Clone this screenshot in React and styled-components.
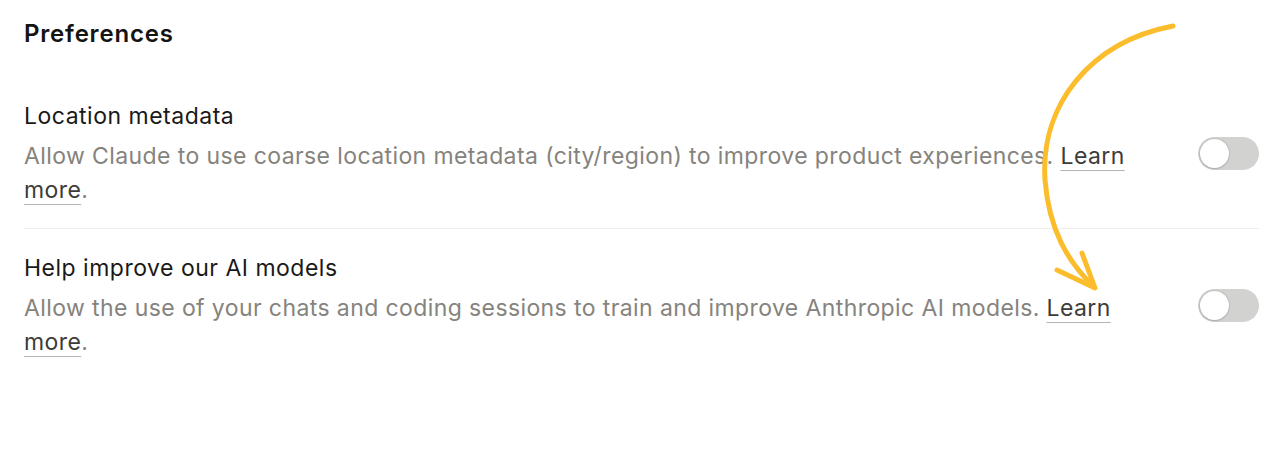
import React, { useState } from 'react';
import styled, { createGlobalStyle } from 'styled-components';

const GlobalStyle = createGlobalStyle`
    body {
        margin: 0;
        background: #ffffff;
        font-family: 'Inter', 'Liberation Sans', sans-serif;
    }
`

const prefs = [
    {
        id: 'location',
        title: 'Location metadata',
        text: 'Allow Claude to use coarse location metadata (city/region) to improve product experiences.',
    },
    {
        id: 'training',
        title: 'Help improve our AI models',
        text: 'Allow the use of your chats and coding sessions to train and improve Anthropic AI models.',
    },
];

function App() {
    const [enabled, setEnabled] = useState({ location: false, training: false });

    const toggle = (id) => {
        setEnabled({ ...enabled, [id]: !enabled[id] });
    };

    return (
        <Page>
            <GlobalStyle />
            <H2>Preferences</H2>
            <List>
                {prefs.map((pref) => (
                    <Row key={pref.id}>
                        <Info>
                            <Label>{pref.title}</Label>
                            <Desc>
                                {pref.text} <LinkText href="#">Learn more</LinkText>.
                            </Desc>
                        </Info>
                        <Switch $on={enabled[pref.id]} onClick={() => toggle(pref.id)}>
                            <Knob $on={enabled[pref.id]} />
                        </Switch>
                    </Row>
                ))}
            </List>
            <Arrow width="1280" height="450" viewBox="0 0 1280 450">
                <path
                    d="M1173 26 C1090 42 1040 105 1045 180 C1049 230 1068 262 1094 287"
                    fill="none"
                    stroke="#fbbd2c"
                    strokeWidth="5"
                    strokeLinecap="round"
                />
                <path
                    d="M1082 253 L1095 288 L1057 270"
                    fill="none"
                    stroke="#fbbd2c"
                    strokeWidth="5"
                    strokeLinecap="round"
                    strokeLinejoin="round"
                />
            </Arrow>
        </Page>
    );
}

const Page = styled.div`
    position: relative;
    height: 450px;
    padding: 16px 21px 0 24px;
    box-sizing: border-box;
`

const H2 = styled.h2`
    margin: 0;
    font-size: 24px;
    font-weight: 600;
    letter-spacing: 0.8px;
    color: #141413;
    line-height: 36px;
`

const List = styled.div`
    display: flex;
    flex-direction: column;
    margin-top: 47px;
`

const Row = styled.div`
    display: flex;
    align-items: center;
    justify-content: space-between;
    gap: 30px;
    padding: 22px 0 21px;
    border-bottom: 1px solid #efeeea;

    &:first-child {
        padding-top: 0;
    }

    &:last-child {
        border-bottom: none;
    }
`

const Info = styled.div`
    display: flex;
    flex-direction: column;
    max-width: 1132px;
`

const Label = styled.div`
    font-size: 23px;
    letter-spacing: 0.5px;
    color: #1a1918;
    line-height: 34px;
`

const Desc = styled.p`
    margin: 6px 0 0;
    font-size: 23px;
    letter-spacing: 0.4px;
    line-height: 34px;
    color: #85837d;
`

const LinkText = styled.a`
    color: #3d3c38;
    text-decoration: underline;
    text-decoration-color: #b5b3ad;
    text-underline-offset: 6px;
    text-decoration-thickness: 1px;
`

const Switch = styled.button`
    flex-shrink: 0;
    width: 61px;
    height: 33px;
    padding: 2px;
    border: none;
    border-radius: 17px;
    background: ${(props) => (props.$on ? '#2c84db' : '#d2d2d0')};
    display: flex;
    justify-content: ${(props) => (props.$on ? 'flex-end' : 'flex-start')};
    cursor: pointer;
`

const Knob = styled.span`
    width: 29px;
    height: 29px;
    border-radius: 50%;
    background: #ffffff;
    box-shadow: 0 0 0 1px rgba(0, 0, 0, 0.08), 0 1px 2px rgba(0, 0, 0, 0.12);
`

const Arrow = styled.svg`
    position: absolute;
    top: 0;
    left: 0;
    pointer-events: none;
`

export default App;
